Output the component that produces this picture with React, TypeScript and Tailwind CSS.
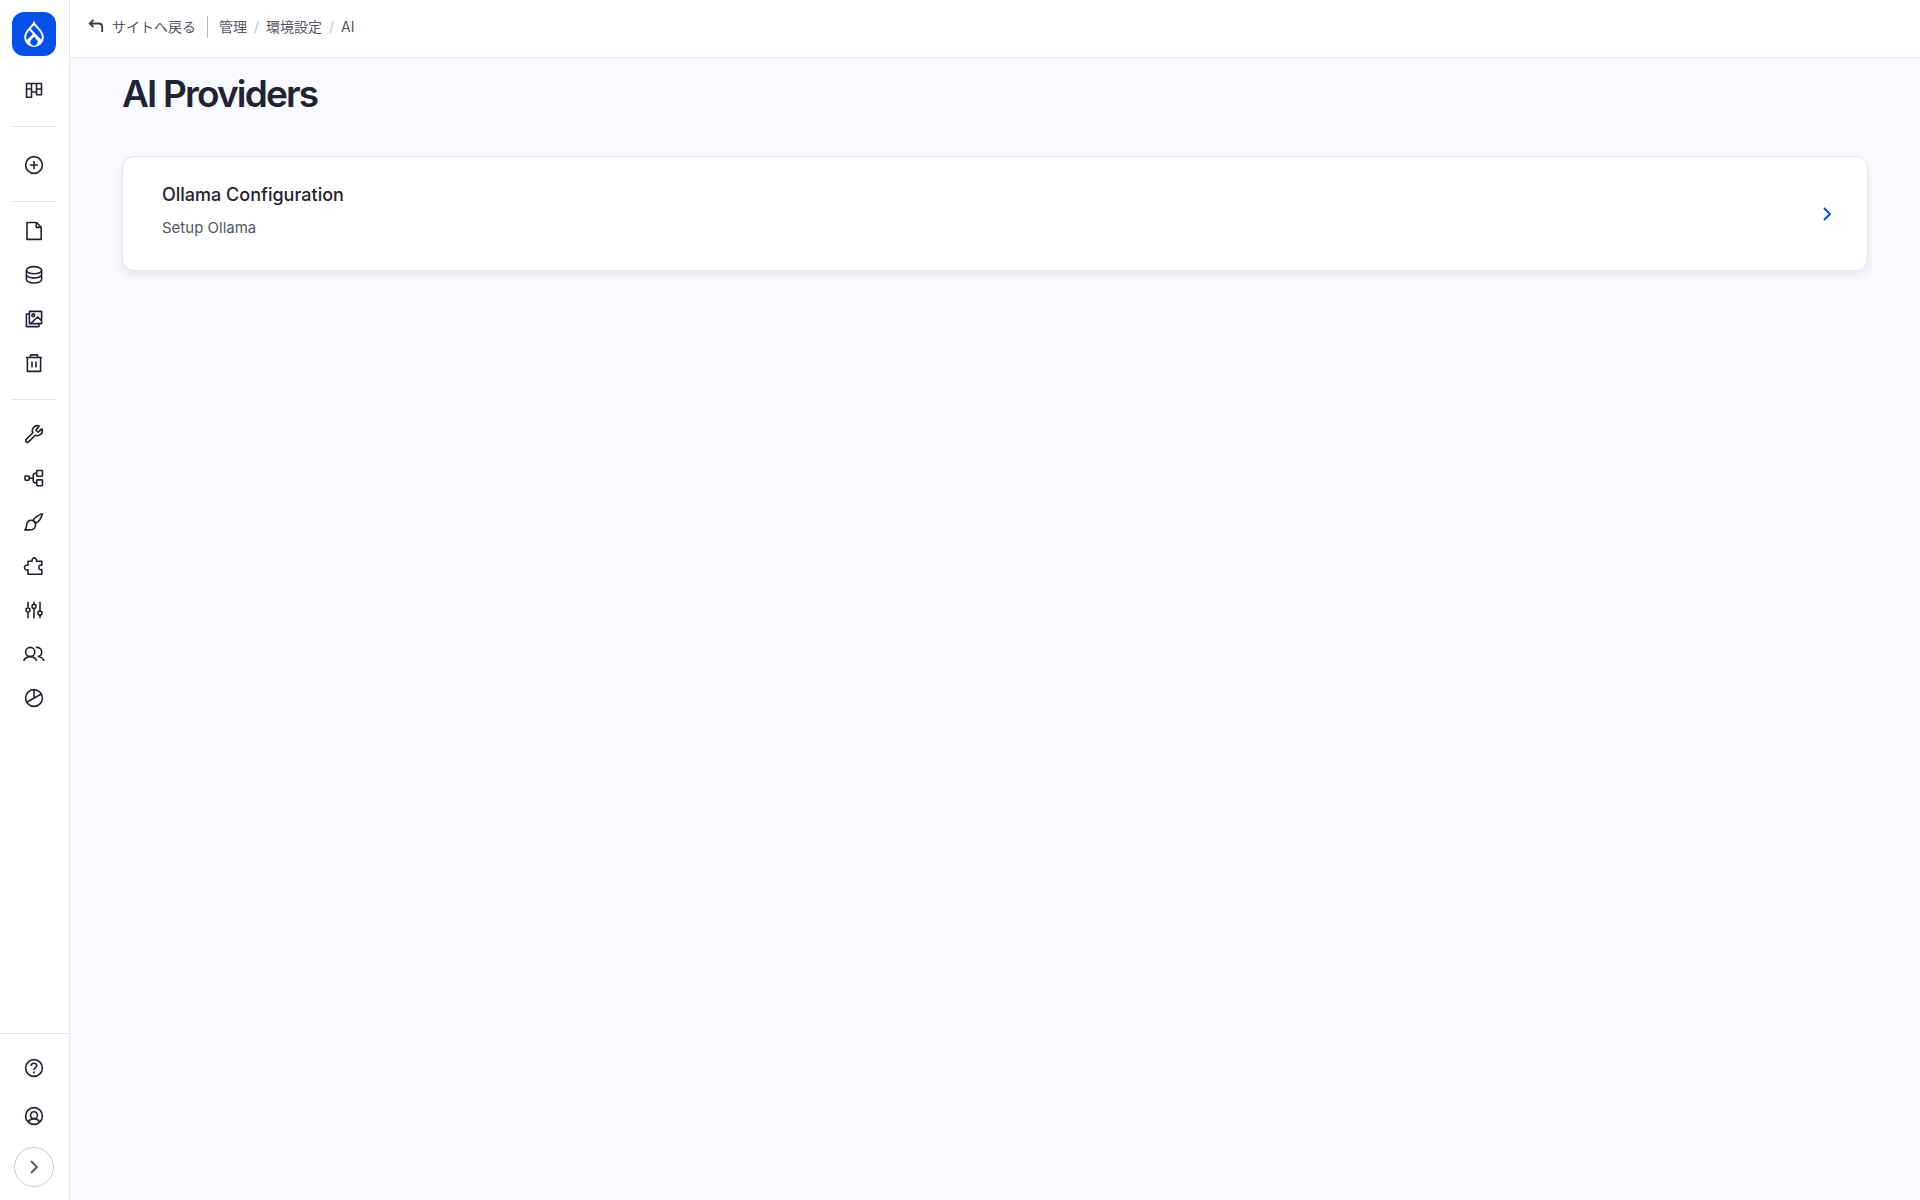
import type { ReactNode } from 'react'
import { Wrench } from 'lucide-react'

function Icon({ children }: { children: ReactNode }) {
  return (
    <svg
      viewBox="0 0 20 20"
      fill="none"
      stroke="currentColor"
      strokeWidth="1.6"
      strokeLinejoin="round"
      aria-hidden="true"
      className="size-5 overflow-visible"
    >
      {children}
    </svg>
  )
}

const contentItems = [
  {
    label: 'コンテンツ',
    icon: (
      <Icon>
        <path d="M3 1.5h9.5l4.7 4.7v12.2H3z" />
        <path d="M12.3 1.7v4.7h4.8" />
      </Icon>
    ),
  },
  {
    label: 'ブロック',
    icon: (
      <Icon>
        <ellipse cx="10" cy="5.2" rx="7.6" ry="3.6" />
        <path d="M2.4 5.2v4.4c0 2 3.4 3.5 7.6 3.5s7.6-1.5 7.6-3.5V5.2M2.4 9.6v4.8c0 2 3.4 3.6 7.6 3.6s7.6-1.6 7.6-3.6V9.6" />
      </Icon>
    ),
  },
  {
    label: 'メディア',
    icon: (
      <Icon>
        <path d="M5.4 2.4h12.2v12.2H5.4z" />
        <path d="M5.400 5H2.400v12.600H15v-3M7 14.200l6.700-6.200 3.900 3.600" />
        <circle cx="9.300" cy="6.300" r="1.400" />
      </Icon>
    ),
  },
  {
    label: 'ゴミ箱',
    icon: (
      <Icon>
        <path d="M2 4.5h16M3.4 4.5v13.9h13.2V4.5M6.2 4.3l.5-2.400h6.600l.5 2.400M8 8.400v6.200M12 8.400v6.200" />
      </Icon>
    ),
  },
]

const adminItems = [
  { label: '管理', icon: <Wrench className="size-5" strokeWidth={1.9} aria-hidden="true" /> },
  {
    label: 'サイト構築',
    icon: (
      <Icon>
        <rect x="1" y="8" width="4.2" height="4.2" rx=".6" />
        <rect x="12.7" y="2.5" width="5.8" height="5.8" rx=".6" />
        <rect x="12.7" y="11.9" width="5.8" height="5.8" rx=".6" />
        <path d="M5.2 10.1h4M12.7 5.3h-1.2q-2.3 0-2.3 2.3v5q0 2.3 2.3 2.3h1.2" />
      </Icon>
    ),
  },
  {
    label: 'テーマ',
    icon: (
      <Icon>
        <path d="M.6 17.9c2.2-1.2 1.7-3 2-5 .4-2.9 2.4-4.6 5-4.6s4.2 1.9 4 4.4c-.3 3.3-2.6 5.2-5.6 5.2z" />
        <path d="M9 8.4c1.4-2.3 4.3-5.2 9.4-6.7-.8 4.6-3.5 7.8-6.8 9.6M9 8.4l2.6 2.9" />
      </Icon>
    ),
  },
  {
    label: '拡張',
    icon: (
      <Icon>
        <path d="M4 5.3h4.1c-.2-1 .1-3.4 2.2-3.4s2.4 2.4 2.2 3.4h5.3v3.9c-1.5-.5-3 .5-3 2.2s1.5 2.700 3 2.200v4.700H4v-4.500c-1.600.600-3.500-.4-3.500-2.300s1.900-2.900 3.500-2.300z" />
      </Icon>
    ),
  },
  {
    label: '環境設定',
    icon: (
      <Icon>
        <path d="M4 1.7v6.1M4 12.2v6M10 1.7v2.5M10 8.6v9.6M16 1.7v9.2M16 15.3v2.9" />
        <circle cx="4" cy="10" r="2" />
        <circle cx="10" cy="6.4" r="2" />
        <circle cx="16" cy="13.1" r="2" />
      </Icon>
    ),
  },
  {
    label: 'ユーザー',
    icon: (
      <Icon>
        <circle cx="6.2" cy="8" r="4.6" />
        <path d="M-.4 16.800C1 14 3.300 12.600 6.200 12.600s5.200 1.400 6.600 4.200M11.800 3.500c3.200-.6 5.900 1.500 5.900 4.500 0 2.500-1.600 4.300-4 4.600M15 12.600c2.300.6 4 2 5.200 4.200" />
      </Icon>
    ),
  },
  {
    label: 'レポート',
    icon: (
      <Icon>
        <circle cx="10" cy="10" r="8.4" />
        <path d="M10 1.6v8.8M2.6 14.3L17.400 6" />
      </Icon>
    ),
  },
]

function NavLink({ label, icon }: { label: string; icon: ReactNode }) {
  return (
    <li>
      <a href="#" aria-label={label} className="flex h-11 items-center justify-center">
        {icon}
      </a>
    </li>
  )
}

function Sidebar() {
  return (
    <nav className="flex w-[70px] shrink-0 flex-col border-r border-[#e4e5eb] bg-white text-[#222330]">
      <div className="flex grow flex-col pr-[13px] pl-3">
        <a
          href="#"
          aria-label="ホーム"
          className="mt-3 flex size-11 items-center justify-center rounded-xl bg-[#0550e6] text-white"
        >
          <svg viewBox="0 0 20 26" fill="none" className="h-[26px] w-5" aria-hidden="true">
            <path d="M9.500 12.500L2.500 19.500Q4.500 24.300 10 24.700Q15.500 24.300 17.500 19.500z" fill="currentColor" />
            <path
              d="M10 2.200C8.500 6 1.200 9.300 1.200 16.200a8.800 8.800 0 0 0 17.600 0C18.800 9.300 11.500 6 10 2.200z"
              stroke="currentColor"
              strokeWidth="2"
            />
            <path d="M5.800 8.300l11 11.500" stroke="currentColor" strokeWidth="2" />
            <path d="M10 15.800l-2.500 2.600a3.600 3.600 0 1 0 5 0z" fill="#0550e6" />
          </svg>
        </a>
        <a href="#" aria-label="ダッシュボード" className="mt-3 flex h-11 items-center justify-center">
          <Icon>
            <path d="M2.500 3.500h15v11.300h-5V12h-5v5.300h-5zM7.500 3.500V12M12.500 3.500V12M2.500 9h5M12.500 9h5" />
          </Icon>
        </a>
        <hr className="mt-3.5 border-[#e4e5eb]" />
        <a href="#" aria-label="作成" className="mt-4 flex h-11 items-center justify-center">
          <Icon>
            <circle cx="10" cy="10" r="8.4" />
            <path d="M10 6v8M6 10h8" />
          </Icon>
        </a>
        <hr className="mt-3.5 border-[#e4e5eb]" />
        <ul className="mt-[7px]">
          {contentItems.map((item) => (
            <NavLink key={item.label} {...item} />
          ))}
        </ul>
        <hr className="mt-3.5 border-[#e4e5eb]" />
        <ul className="mt-3">
          {adminItems.map((item) => (
            <NavLink key={item.label} {...item} />
          ))}
        </ul>
      </div>
      <div className="flex flex-col items-center border-t border-[#e4e5eb] pt-3 pr-px pb-[13px]">
        <a href="#" aria-label="ヘルプ" className="flex h-11 items-center">
          <Icon>
            <circle cx="10" cy="10" r="8.4" />
            <path d="M7.200 8c0-3.600 5.600-3.500 5.600-.4C12.800 9.600 10 9.600 10 12" />
            <path d="M10 13.500v1.800" strokeWidth="1.800" />
          </Icon>
        </a>
        <a href="#" aria-label="アカウント" className="mt-1 flex h-11 items-center">
          <Icon>
            <circle cx="10" cy="10" r="8.4" />
            <circle cx="10" cy="9.2" r="3.4" />
            <path d="M4.300 15.900c1.200-2 3.200-3.300 5.700-3.300s4.500 1.300 5.700 3.300" />
          </Icon>
        </a>
        <button
          type="button"
          aria-label="サイドバーを展開"
          className="mt-[9px] flex size-10 items-center justify-center rounded-full border border-[#c9cad2] text-[#55565f]"
        >
          <svg viewBox="0 0 8 14" fill="none" stroke="currentColor" strokeWidth="1.8" className="h-3.5 w-2">
            <path d="M1 1l6 6-6 6" />
          </svg>
        </button>
      </div>
    </nav>
  )
}

function TopBar() {
  return (
    <header className="flex h-[58px] items-center border-b border-[#e4e5eb] bg-white pb-[3px] pl-[18px] text-sm text-[#545560]">
      <a href="#" className="flex items-center gap-2">
        <svg
          viewBox="0 0 16 16"
          fill="none"
          stroke="#3a3b46"
          strokeWidth="1.8"
          className="size-4"
          aria-hidden="true"
        >
          <path d="M5.500 0.800L1.700 4.500l3.800 3.700M1.700 4.500h9q3.500 0 3.500 3.500v5" />
        </svg>
        サイトへ戻る
      </a>
      <nav className="ml-[11px] flex h-[22px] items-center gap-[7px] border-l border-[#b4b5bd] pl-[11px]">
        <a href="#">管理</a>
        <span className="text-[#c3c4cb]">/</span>
        <a href="#">環境設定</a>
        <span className="text-[#c3c4cb]">/</span>
        <a href="#">AI</a>
      </nav>
    </header>
  )
}

export default function App() {
  return (
    <div className="flex min-h-screen bg-[#f9faff] font-['Inter','Noto_Sans_CJK_JP',sans-serif] text-[#222330]">
      <Sidebar />
      <div className="min-w-0 grow">
        <TopBar />
        <main className="px-[52px] pt-3">
          <h1 className="text-[37px] leading-[48px] font-semibold tracking-tighter">AI Providers</h1>
          <a
            href="#"
            className="mt-[38px] flex items-center justify-between rounded-xl border border-[#e4e5eb] bg-white py-6 pr-9 pl-[39px] shadow-[0_4px_8px_rgba(34,35,48,0.08)]"
          >
            <div className="pb-1.5">
              <h2 className="text-lg leading-7 font-medium">Ollama Configuration</h2>
              <p className="mt-[7px] text-[15px] leading-6 text-[#545560]">Setup Ollama</p>
            </div>
            <svg viewBox="0 0 8 14" fill="none" stroke="#0550e6" strokeWidth="2" className="h-3.5 w-2" aria-hidden="true">
              <path d="M1 1l6 6-6 6" />
            </svg>
          </a>
        </main>
      </div>
    </div>
  )
}
